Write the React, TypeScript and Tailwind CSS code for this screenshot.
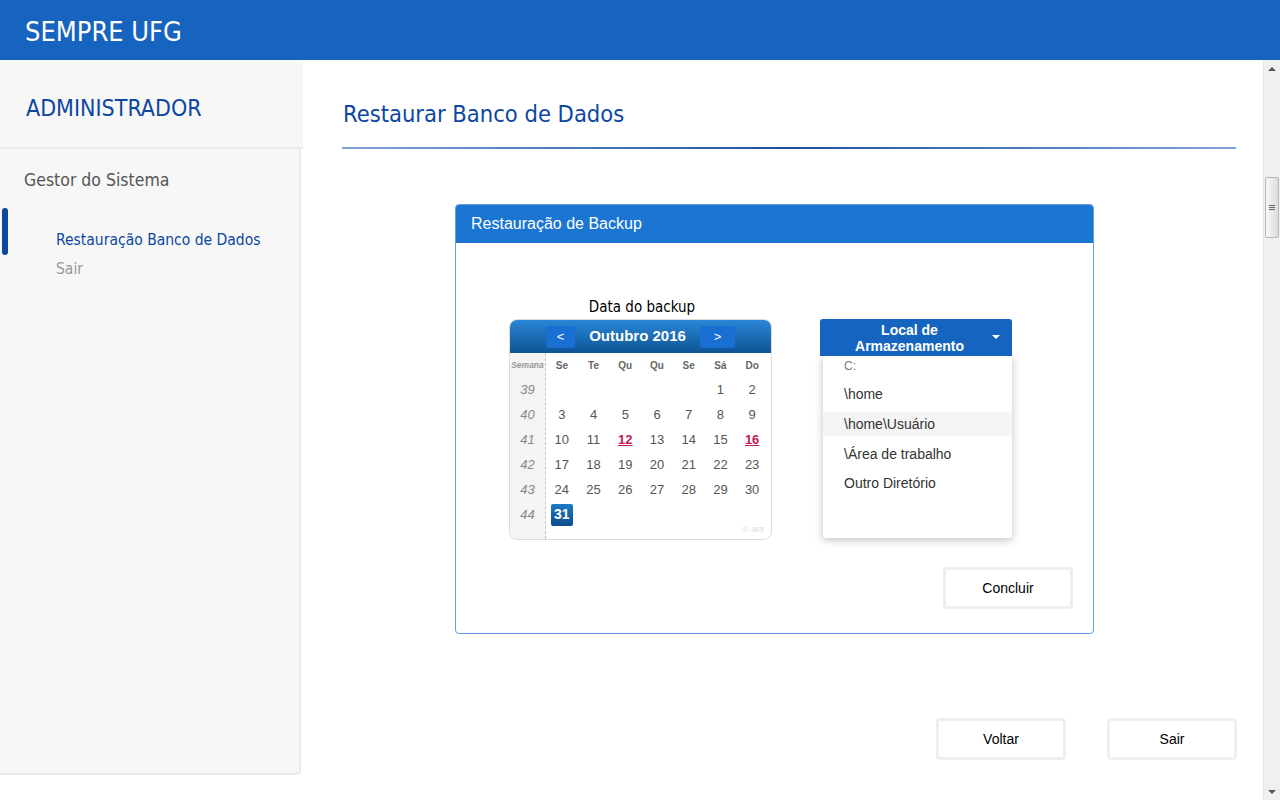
const tahoma = "font-['DejaVu_Sans_Condensed','DejaVu_Sans',sans-serif]";
const arial = "font-['Liberation_Sans',Arial,sans-serif]";

const weeks: { n: number; days: (number | null)[] }[] = [
  { n: 39, days: [null, null, null, null, null, 1, 2] },
  { n: 40, days: [3, 4, 5, 6, 7, 8, 9] },
  { n: 41, days: [10, 11, 12, 13, 14, 15, 16] },
  { n: 42, days: [17, 18, 19, 20, 21, 22, 23] },
  { n: 43, days: [24, 25, 26, 27, 28, 29, 30] },
  { n: 44, days: [31, null, null, null, null, null, null] },
];

function Calendar() {
  const heads = ["Se", "Te", "Qu", "Qu", "Se", "Sá", "Do"];
  return (
    <div className={`${arial} w-[263px] rounded-lg border border-[#dcdcdc] bg-white overflow-hidden relative`}>
      <div className="h-[33px] bg-gradient-to-b from-[#2a86d8] to-[#0d5594] flex items-center justify-center gap-0">
        <button className="w-[29px] h-[22px] rounded-[3px] bg-[#1a6fd2] text-white text-[13px]">&lt;</button>
        <div className="w-[125px] text-center text-white font-bold text-[15px]">Outubro 2016</div>
        <button className="w-[35px] h-[22px] rounded-[3px] bg-[#1a6fd2] text-white text-[13px]">&gt;</button>
      </div>
      <div className="flex">
        <div className="w-[36px] bg-[#f4f4f4] border-r border-dashed border-[#c8c8c8] pb-[12px]">
          <div className="h-[24px] flex items-center justify-center text-[8.5px] italic font-bold text-[#999]">Semana</div>
          {weeks.map((w) => (
            <div key={w.n} className="h-[25px] flex items-center justify-center text-[13px] italic text-[#888]">{w.n}</div>
          ))}
        </div>
        <div className="flex-1 pr-[3px]">
          <div className="grid grid-cols-7 h-[24px] items-center">
            {heads.map((h, i) => (
              <div key={i} className="text-center text-[10px] font-bold text-[#666]">{h}</div>
            ))}
          </div>
          {weeks.map((w) => (
            <div key={w.n} className="grid grid-cols-7 h-[25px] items-center">
              {w.days.map((d, i) => (
                <div key={i} className="flex justify-center">
                  {d === 31 ? (
                    <span className="w-[22px] h-[22px] rounded-[2px] bg-gradient-to-b from-[#1f7ac8] to-[#0b4e8a] text-white font-bold text-[14px] flex items-center justify-center">31</span>
                  ) : d === 12 || d === 16 ? (
                    <span className="text-[13px] font-bold text-[#c2185b] underline">{d}</span>
                  ) : (
                    <span className="text-[13px] text-[#555]">{d ?? ""}</span>
                  )}
                </div>
              ))}
            </div>
          ))}
        </div>
      </div>
      <div className="absolute right-[7px] bottom-[3px] text-[8px] text-[#e4e4e4] font-bold">© 365</div>
    </div>
  );
}

function Dropdown() {
  const items = ["\\home", "\\home\\Usuário", "\\Área de trabalho", "Outro Diretório"];
  return (
    <div className={`${arial} w-[192px]`}>
      <div className="h-[37px] bg-[#1565c0] rounded-t-[3px] flex items-center text-white font-bold text-[14px] leading-[16px] relative">
        <div className="flex-1 text-center pr-[13px]">Local de<br />Armazenamento</div>
        <span className="absolute right-[12px] top-[16px] w-0 h-0 border-l-[4px] border-r-[4px] border-t-[4px] border-l-transparent border-r-transparent border-t-white" />
      </div>
      <div className="ml-[3px] h-[182px] bg-white rounded-b-[3px] shadow-[0_2px_8px_rgba(0,0,0,0.25)] text-[14px] text-[#333]">
        <div className="h-[20px] pl-[21px] flex items-center text-[12px] text-[#777]">C:</div>
        <div className="h-[36px] pl-[21px] flex items-center">{items[0]}</div>
        <div className="h-[24px] pl-[21px] flex items-center bg-[#f5f5f5]">{items[1]}</div>
        <div className="h-[36px] pl-[21px] flex items-center">{items[2]}</div>
        <div className="h-[22px] pl-[21px] flex items-center">{items[3]}</div>
      </div>
    </div>
  );
}

function Btn({ label }: { label: string }) {
  return (
    <button className={`${arial} w-[130px] h-[42px] bg-white border-[3px] border-[#efefef] rounded-[4px] text-[14px] text-black`}>
      {label}
    </button>
  );
}

export default function App() {
  return (
    <div className={`${tahoma} w-[1280px] h-[800px] overflow-hidden bg-white flex flex-col`}>
      <header className="h-[60px] shrink-0 bg-[#1664c0] flex items-center pl-[25px]">
        <h1 className="text-white text-[27px] pt-[4px]">SEMPRE UFG</h1>
      </header>
      <div className="flex flex-1 min-h-0">
        <aside className="w-[301px] shrink-0 self-start h-[715px] bg-[#f7f7f7] border-r-2 border-b-2 border-[#ebebeb] rounded-br-[4px]">
          <div className="h-[89px] w-[303px] bg-[#f7f7f7] border-b-2 border-[#ebebeb] flex items-center pl-[26px] pt-[10px]">
            <h2 className="text-[#0d47a1] text-[23px]">ADMINISTRADOR</h2>
          </div>
          <div className="pl-[24px] pt-[18px] text-[17.5px] text-[#555]">Gestor do Sistema</div>
          <div className="flex mt-[15px]">
            <div className="ml-[2px] w-[6px] h-[47px] rounded-full bg-[#0d47a1]" />
            <div className="pl-[48px] pt-[21px]">
              <div className="text-[15.5px] text-[#0d47a1]">Restauração Banco de Dados</div>
              <div className="text-[15.5px] text-[#999] mt-[5px]">Sair</div>
            </div>
          </div>
        </aside>
        <main className="flex-1 pl-[41px] pr-[26px]">
          <div className="pt-[37px] h-[87px]">
            <h2 className="text-[#0d47a1] text-[23.5px] pl-[1px]">Restaurar Banco de Dados</h2>
          </div>
          <div className="h-[2px] bg-gradient-to-r from-[#7fa4d8] via-[#1a4fa0] to-[#7fa4d8] mr-[1px]" />
          <div className="mt-[55px] ml-[113px] w-[639px] h-[430px] border border-[#5f9fe6] rounded-[4px] overflow-hidden flex flex-col">
            <div className={`${arial} h-[38px] bg-[#1a76d2] flex items-center pl-[15px] text-white text-[16px]`}>Restauração de Backup</div>
            <div className="flex-1 relative">
              <div className="flex pt-[54px] pl-[53px]">
                <div className="flex flex-col items-center">
                  <div className="text-[15px] text-black h-[22px] leading-[20px] pl-[3px]">Data do backup</div>
                  <Calendar />
                </div>
                <div className="ml-[48px] mt-[22px]">
                  <Dropdown />
                </div>
              </div>
              <div className="flex justify-end pr-[20px] mt-[27px]">
                <Btn label="Concluir" />
              </div>
            </div>
          </div>
          <div className="flex justify-end gap-[41px] mt-[84px]">
            <Btn label="Voltar" />
            <Btn label="Sair" />
          </div>
        </main>
        <div className="w-[17px] shrink-0 bg-[#f0f0f0] border-l border-[#e6e6e6] flex flex-col relative">
          <div className="h-[17px] flex items-center justify-center">
            <span className="w-0 h-0 border-l-[4px] border-r-[4px] border-b-[4px] border-l-transparent border-r-transparent border-b-[#555]" />
          </div>
          <div className="mt-[100px] mx-[1px] h-[61px] bg-gradient-to-r from-[#f8f8f8] to-[#dcdcdc] border border-[#b8b8b8] rounded-[2px] flex flex-col items-center justify-center gap-[1px]">
            <span className="w-[6px] h-[1px] bg-[#666]" />
            <span className="w-[6px] h-[1px] bg-[#666]" />
            <span className="w-[6px] h-[1px] bg-[#666]" />
          </div>
          <div className="flex-1" />
          <div className="h-[17px] flex items-center justify-center">
            <span className="w-0 h-0 border-l-[4px] border-r-[4px] border-t-[4px] border-l-transparent border-r-transparent border-t-[#555]" />
          </div>
        </div>
      </div>
    </div>
  );
}
